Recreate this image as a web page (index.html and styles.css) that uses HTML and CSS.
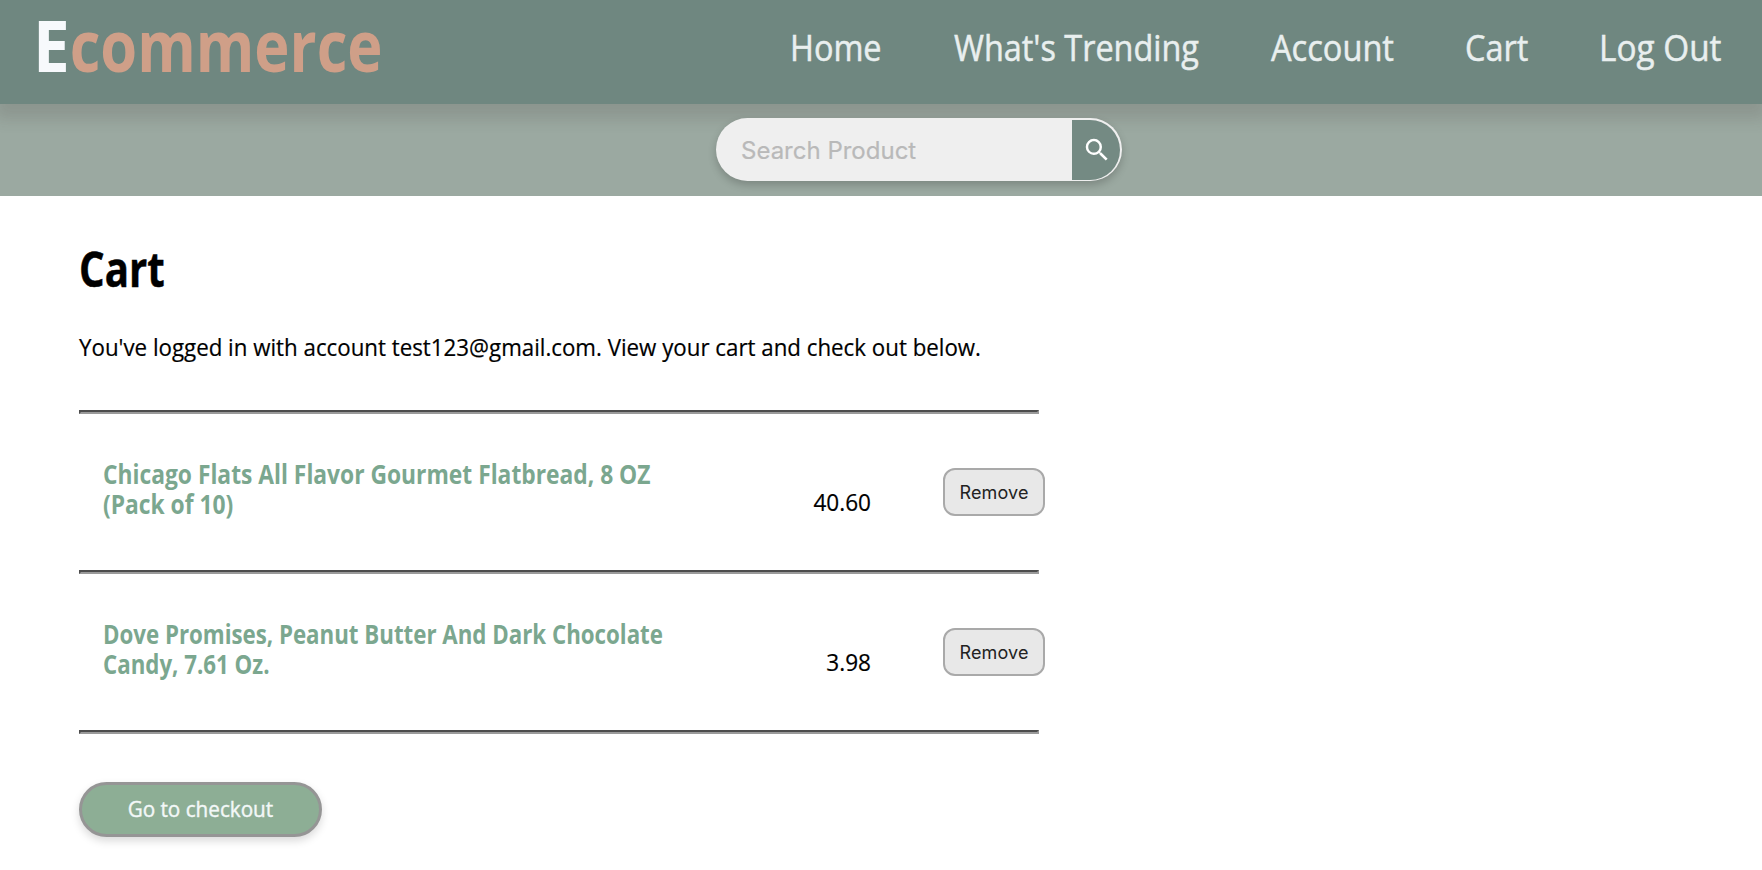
FILE: index.html
```
<!DOCTYPE html>
<html lang="en">
<head>
<meta charset="utf-8">
<title>Cart - Ecommerce</title>
<link rel="stylesheet" href="styles.css">
</head>
<body>
<header class="header">
  <div class="logo"><span class="logo-initial">E</span>commerce</div>
  <nav class="nav">
    <a class="nav-link nav-home">Home</a>
    <a class="nav-link nav-trending">What's Trending</a>
    <a class="nav-link nav-account">Account</a>
    <a class="nav-link nav-cart">Cart</a>
    <a class="nav-link nav-logout">Log Out</a>
  </nav>
</header>
<div class="search-bar">
  <form class="search">
    <input class="search-input" type="text" placeholder="Search Product">
    <button class="search-button" type="button" aria-label="Search">
      <svg class="search-icon" viewBox="0 0 24 24"><path d="M15.5 14h-.79l-.28-.27A6.471 6.471 0 0 0 16 9.5 6.5 6.5 0 1 0 9.5 16c1.61 0 3.09-.59 4.23-1.57l.27.28v.79l5 4.99L20.49 19l-4.99-5zm-6 0C7.01 14 5 11.99 5 9.5S7.01 5 9.5 5 14 7.01 14 9.5 11.99 14 9.5 14z"/></svg>
    </button>
  </form>
</div>
<main class="main">
  <h1 class="title">Cart</h1>
  <p class="intro">You've logged in with account test123@gmail.com. View your cart and check out below.</p>
  <hr class="rule">
  <section class="item">
    <h2 class="item-name">Chicago Flats All Flavor Gourmet Flatbread, 8 OZ<br>(Pack of 10)</h2>
    <span class="item-price">40.60</span>
    <button class="remove" type="button">Remove</button>
  </section>
  <hr class="rule">
  <section class="item">
    <h2 class="item-name item-name-tight">Dove Promises, Peanut Butter And Dark Chocolate<br>Candy, 7.61 Oz.</h2>
    <span class="item-price">3.98</span>
    <button class="remove" type="button">Remove</button>
  </section>
  <hr class="rule">
  <button class="checkout" type="button"><span class="checkout-label">Go to checkout</span></button>
</main>
</body>
</html>
```
FILE: styles.css
```
* { box-sizing: border-box; }
body {
  margin: 0;
  background: #fff;
  color: #000;
  font-family: "Open Sans", "Noto Sans", sans-serif;
}
.header {
  position: relative;
  display: flex;
  justify-content: space-between;
  height: 104px;
  padding: 0 41px 0 33px;
  background: #6f8780;
  box-shadow: 0 10px 14px 5px rgba(60, 50, 50, .15);
}
.logo {
  width: 350px;
  font-size: 72px;
  font-weight: 700;
  line-height: 88px;
  white-space: nowrap;
  color: #cf9f88;
  transform: scaleX(.828);
  transform-origin: left;
}
.logo-initial {
  display: inline-block;
  margin-right: 4px;
  color: #f7f9fc;
  transform: scaleX(1.1);
  transform-origin: left;
}
.nav {
  display: flex;
  gap: 72px;
  font-size: 36px;
  line-height: 96px;
  color: #e9efef;
  white-space: nowrap;
  -webkit-text-stroke: .5px;
}
.nav-link { transform-origin: left; }
.nav-home { width: 92px; transform: scaleX(.9); }
.nav-trending { width: 245px; transform: scaleX(.9); }
.nav-account { width: 122px; transform: scaleX(.905); }
.nav-cart { width: 62px; transform: scaleX(.9); }
.nav-logout { width: 122px; transform: scaleX(.926); }
.search-bar {
  display: flex;
  height: 92px;
  padding: 14px 0 0 716px;
  background: #9ba9a1;
}
.search {
  position: relative;
  display: flex;
  width: 406px;
  height: 63px;
  padding: 2px 2px 1px 0;
  border-radius: 32px;
  background: #efefef;
  box-shadow: 0 4px 8px rgba(0, 0, 0, .2);
}
.search-input {
  width: 356px;
  padding: 0 0 0 25px;
  border: 0;
  background: transparent;
  font: 24px Inter, sans-serif;
}
.search-input::placeholder { color: #b9b9b9; -webkit-text-stroke: .2px; }
.search-button {
  display: flex;
  align-items: center;
  width: 48px;
  padding: 0 0 0 10px;
  border: 0;
  border-radius: 0 30px 30px 0;
  background: #748a83;
}
.search-icon { flex: none; width: 30px; height: 30px; fill: #fff; }
.main { padding: 49px 0 33px 79px; }
.title {
  margin: 0 0 39px;
  font-size: 48px;
  line-height: 48px;
  transform: scaleX(.838);
  transform-origin: left;
  -webkit-text-stroke: .5px;
}
.intro {
  margin: 0 0 48px;
  font-size: 24px;
  line-height: 30px;
  transform: scaleX(.929);
  transform-origin: left;
  -webkit-text-stroke: .2px;
}
.rule {
  width: 960px;
  height: 4px;
  margin: 0;
  border: 2px solid;
  border-color: #4c4c4c #9a9a9a #9a9a9a #4c4c4c;
}
.item {
  display: grid;
  grid-template-columns: 600px 168px 102px;
  align-items: start;
  width: 966px;
  height: 156px;
  padding-left: 24px;
}
.item-name {
  margin: 45px 0 0;
  font-size: 26px;
  line-height: 30px;
  white-space: nowrap;
  color: #7ba78f;
  transform: scaleX(.877);
  transform-origin: left;
}
.item-name-tight { transform: scaleX(.857); }
.item-price {
  padding-top: 73px;
  font-size: 24px;
  line-height: 30px;
  text-align: right;
  transform: scaleX(.94);
  transform-origin: right;
  -webkit-text-stroke: .2px;
}
.remove {
  width: 102px;
  height: 48px;
  margin: 54px 0 0 72px;
  padding: 0;
  border: 2px solid #a9a9a9;
  border-radius: 12px;
  background: #e8e8e8;
  color: #222;
  font: 18px Inter, sans-serif;
  letter-spacing: .15px;
}
.checkout {
  display: flex;
  align-items: center;
  justify-content: center;
  width: 243px;
  height: 55px;
  margin-top: 48px;
  padding: 0 0 4px;
  border: 3px solid #959595;
  border-radius: 28px;
  background: #8dae95;
  box-shadow: 0 4px 8px rgba(0, 0, 0, .15);
  color: #f3f8f8;
  font-family: inherit;
  font-size: 22px;
}
.checkout-label {
  transform: scaleX(.94);
  -webkit-text-stroke: .4px;
}
```
